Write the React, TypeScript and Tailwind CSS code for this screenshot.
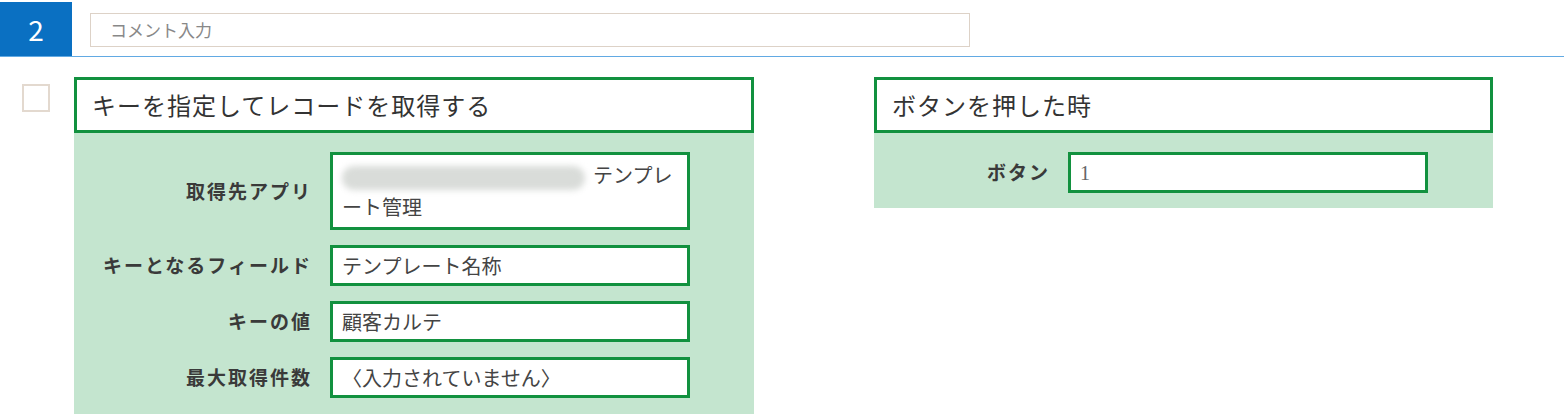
const font = { fontFamily: '"Noto Sans CJK JP", "Noto Sans", sans-serif' };

function Field({ children, tall }: { children: React.ReactNode; tall?: boolean }) {
  return (
    <div
      className={`w-[360px] border-[3px] border-[#12913f] bg-white px-[9px] text-[20px] text-[#444] ${
        tall ? "py-[4px] leading-[32px]" : "flex h-[41px] items-center"
      }`}
    >
      {children}
    </div>
  );
}

function Row({ label, children, labelW }: { label: string; children: React.ReactNode; labelW: string }) {
  return (
    <div className="flex items-center gap-[18px]">
      <div className={`${labelW} shrink-0 text-right text-[19px] font-bold tracking-[2px] text-[#3a3a3a]`}>{label}</div>
      {children}
    </div>
  );
}

export default function App() {
  return (
    <div className="h-[419px] w-[1564px] bg-white" style={font}>
      <div className="flex h-[57px] items-end border-b border-[#62aae3] pr-[2px]">
        <div className="flex h-[54px] w-[72px] items-center justify-center bg-[#0a70c2] text-[28px] text-white">
          2
        </div>
        <div className="mb-[9px] ml-[18px] flex h-[34px] w-[880px] items-center self-end border border-[#ddd2c7] px-[19px] text-[17px] text-[#888]">
          コメント入力
        </div>
      </div>

      <div className="flex pt-[20px]">
        <div className="ml-[22px] mt-[7px] h-[28px] w-[28px] border-2 border-[#e3d9cf]" />

        <div className="ml-[24px] w-[680px]">
          <div className="flex h-[56px] items-center border-[3px] border-[#12913f] px-[15px] text-[24px] tracking-[1px] text-[#333]">
            キーを指定してレコードを取得する
          </div>
          <div className="flex flex-col gap-[15px] bg-[#c4e5cf] pb-[16px] pt-[19px]">
            <Row label="取得先アプリ" labelW="w-[238px]">
              <Field tall>
                <span className="mr-[8px] inline-block h-[24px] w-[243px] rounded-full bg-[#d9dcd9] align-middle blur-[3px]" />
                テンプレート管理
              </Field>
            </Row>
            <Row label="キーとなるフィールド" labelW="w-[238px]">
              <Field>テンプレート名称</Field>
            </Row>
            <Row label="キーの値" labelW="w-[238px]">
              <Field>顧客カルテ</Field>
            </Row>
            <Row label="最大取得件数" labelW="w-[238px]">
              <Field>〈入力されていません〉</Field>
            </Row>
          </div>
        </div>

        <div className="ml-[120px] w-[619px]">
          <div className="flex h-[56px] items-center border-[3px] border-[#12913f] px-[15px] text-[24px] tracking-[1px] text-[#333]">
            ボタンを押した時
          </div>
          <div className="bg-[#c4e5cf] pb-[15px] pt-[19px]">
            <Row label="ボタン" labelW="w-[176px]">
              <Field>
                <span className="text-[#666]" style={{ fontFamily: '"Liberation Serif", serif' }}>1</span>
              </Field>
            </Row>
          </div>
        </div>
      </div>
    </div>
  );
}
